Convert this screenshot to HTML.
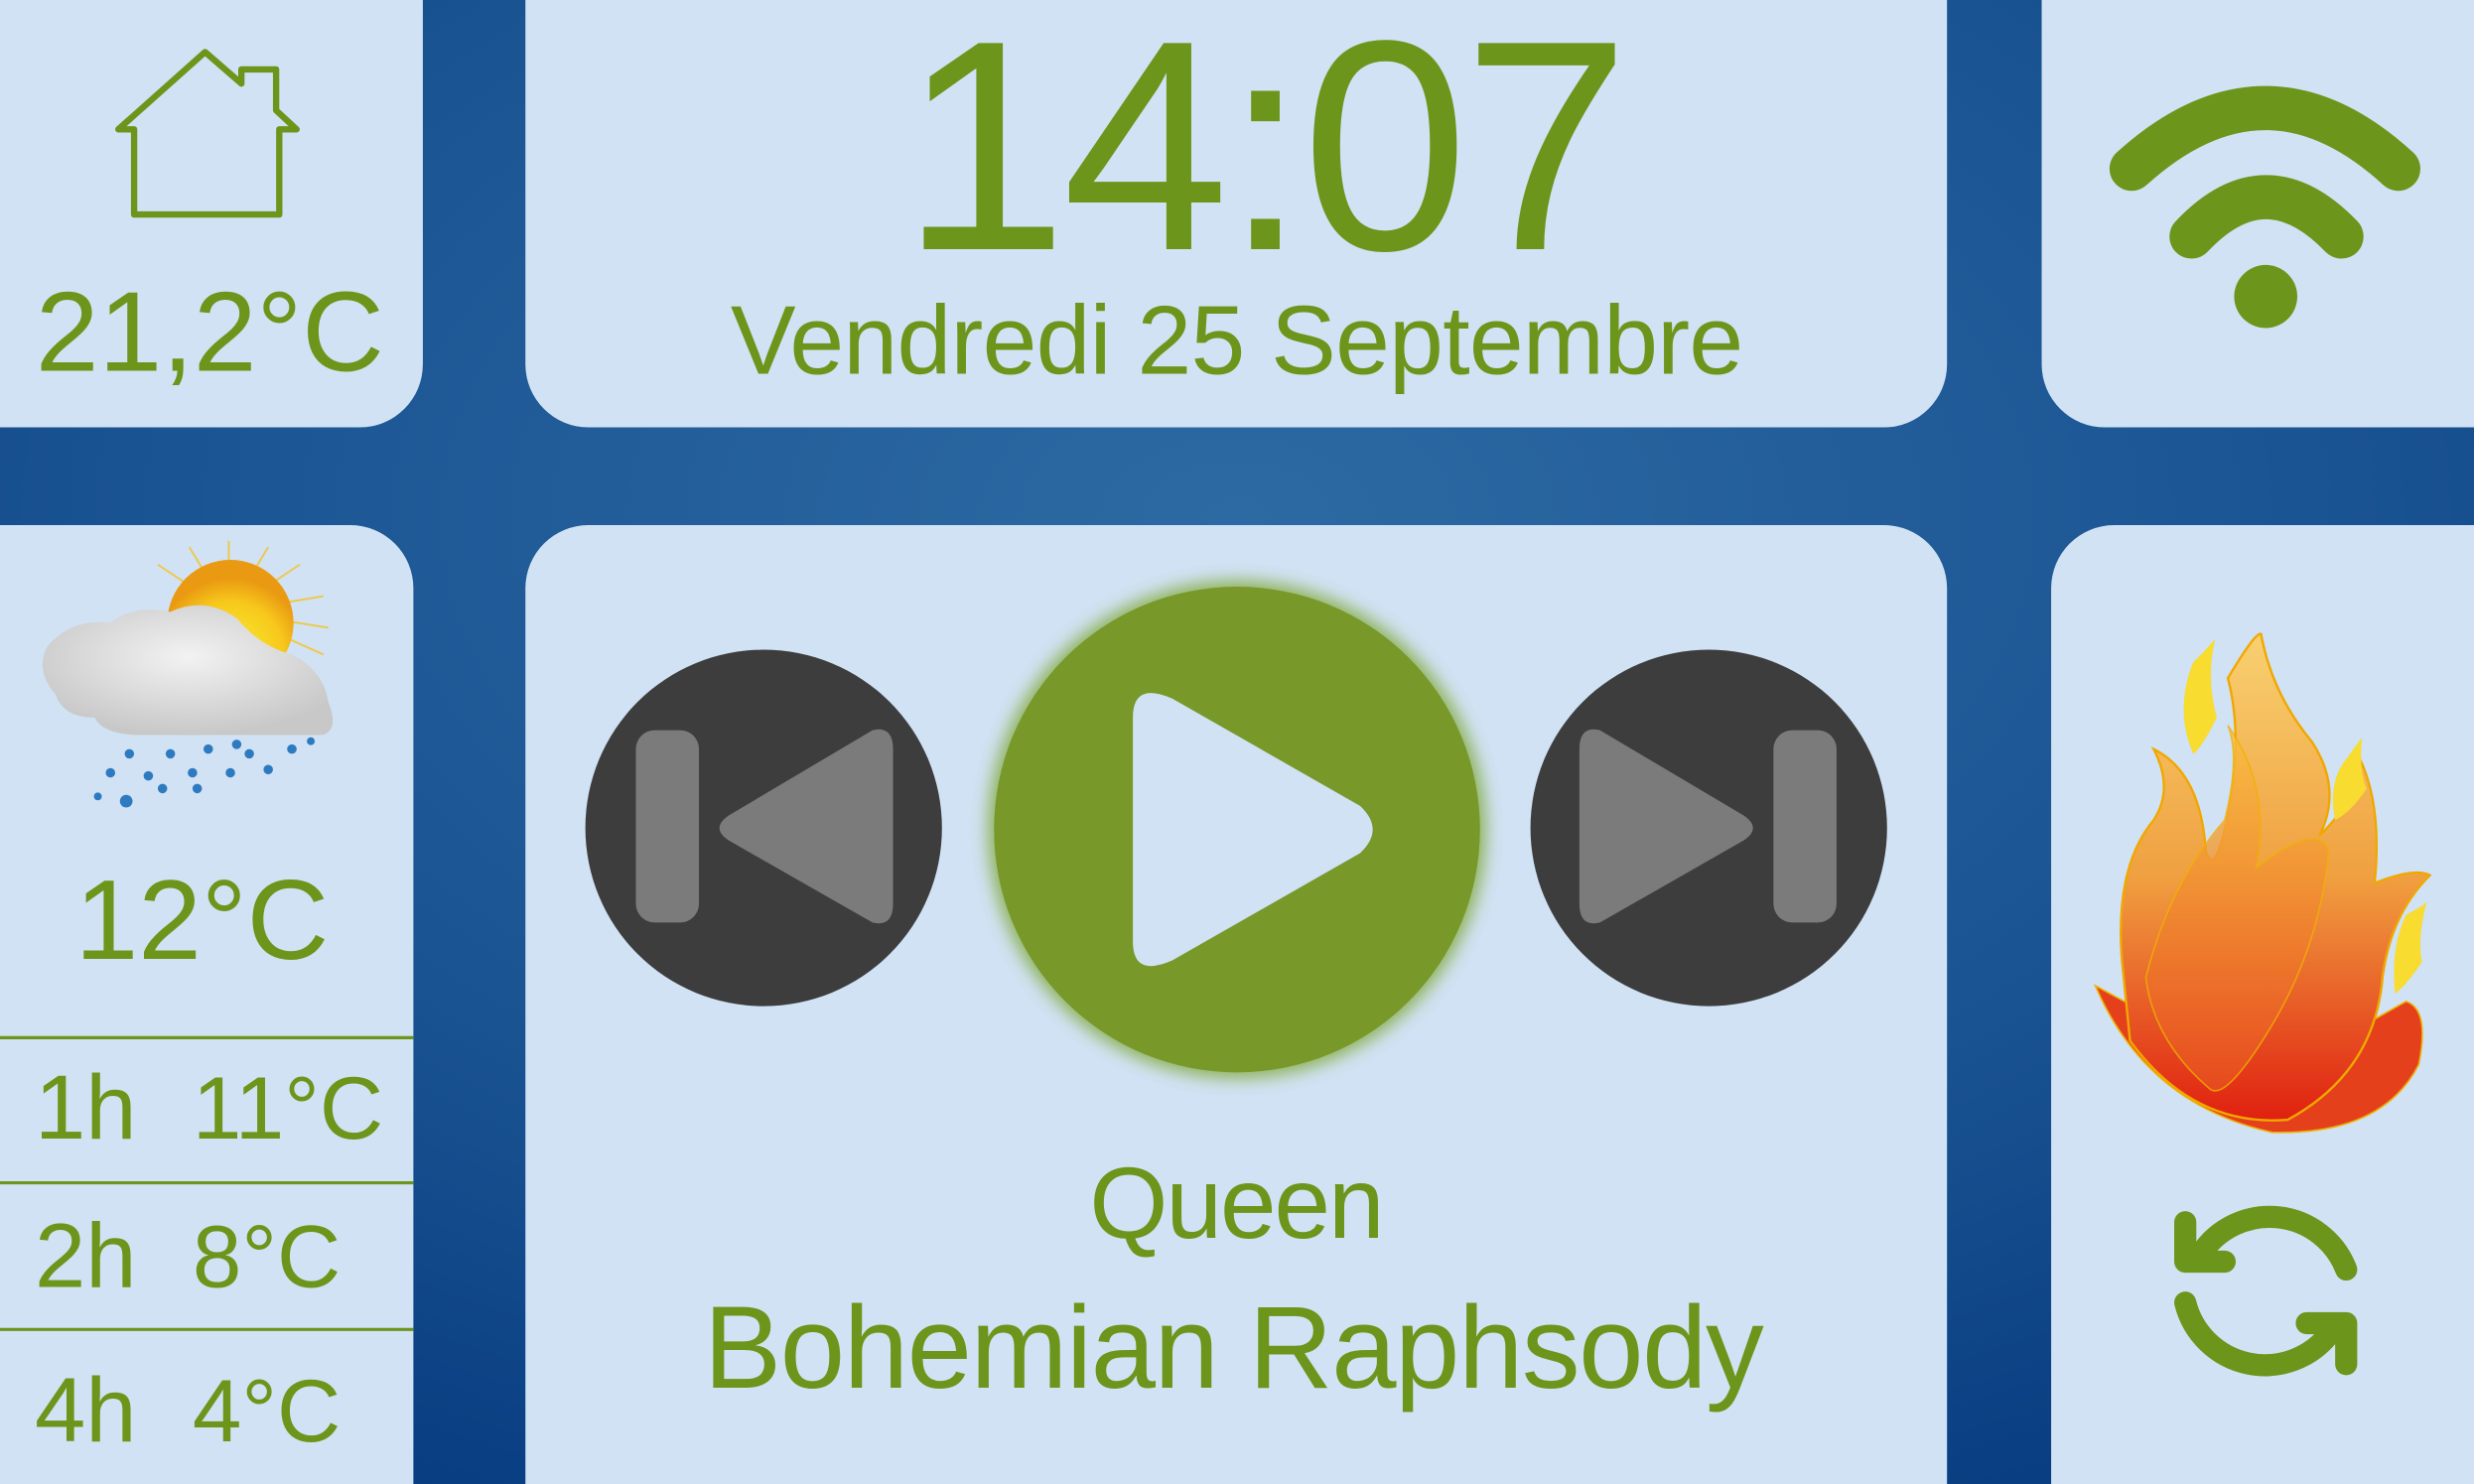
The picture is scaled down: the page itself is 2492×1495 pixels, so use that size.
<!DOCTYPE html>
<html><head><meta charset="utf-8"><style>
html,body{margin:0;padding:0;width:2492px;height:1495px;overflow:hidden;background:#0b4283}
svg{display:block}
text{font-family:"Liberation Sans",sans-serif;fill:#6b961b}
</style></head><body>
<svg width="2492" height="1495" viewBox="0 0 1568 941" preserveAspectRatio="none">
<defs>
<radialGradient id="bg" cx="0.5" cy="0.35" r="0.75">
<stop offset="0" stop-color="#2d6aa3"/><stop offset="0.6" stop-color="#1a5392"/><stop offset="1" stop-color="#073c80"/>
</radialGradient>
<radialGradient id="sun" cx="0.5" cy="0.75" r="0.6"><stop offset="0" stop-color="#f8f030"/><stop offset="0.7" stop-color="#f7c81c"/><stop offset="1" stop-color="#ea9a12"/></radialGradient>
<radialGradient id="cloud" cx="0.5" cy="0.4" r="0.6"><stop offset="0" stop-color="#f2f2f2"/><stop offset="1" stop-color="#c8c8c8"/></radialGradient>
<linearGradient id="fl" x1="0" y1="0" x2="0" y2="1"><stop offset="0" stop-color="#f8d070"/><stop offset="0.5" stop-color="#f0a040"/><stop offset="1" stop-color="#e02010"/></linearGradient>
<linearGradient id="fl2" x1="0" y1="0" x2="0" y2="1"><stop offset="0" stop-color="#f9c040"/><stop offset="1" stop-color="#e85020"/></linearGradient>
<filter id="glow" x="-20%" y="-20%" width="140%" height="140%"><feGaussianBlur stdDeviation="5"/></filter>
</defs>
<rect width="1568" height="941" fill="url(#bg)"/>
<g fill="#d0e2f3">
<path d="M0 0H268V231a40 40 0 0 1-40 40H0Z"/>
<path d="M333 0H1234V231a40 40 0 0 1-40 40H373a40 40 0 0 1-40-40Z"/>
<path d="M1294 0H1568V271H1334a40 40 0 0 1-40-40Z"/>
<path d="M0 333H222a40 40 0 0 1 40 40V941H0Z"/>
<path d="M373 333H1194a40 40 0 0 1 40 40V941H333V373a40 40 0 0 1 40-40Z"/>
<path d="M1340 333H1568V941H1300V373a40 40 0 0 1 40-40Z"/>
</g>
<!-- house -->
<path d="M75 82L130 33L153 53V44H175V70L188 82H177V136H85V82Z" fill="none" stroke="#6b961b" stroke-width="4" stroke-linejoin="round"/>
<text x="133" y="235" font-size="72" text-anchor="middle">21,2°C</text>
<text x="802" y="158" font-size="190" text-anchor="middle" textLength="462">14:07</text>
<text x="784" y="237" font-size="62" text-anchor="middle" textLength="642">Vendredi 25 Septembre</text>
<!-- wifi -->
<g fill="none" stroke="#6b961b" stroke-width="28" stroke-linecap="round">
<path d="M1351 107Q1436 30 1520 107"/>
<path d="M1389 150Q1436 100 1484 150"/>
</g>
<circle cx="1436" cy="188" r="20" fill="#6b961b"/>
<!-- weather -->
<g stroke="#f7c21c" stroke-width="1.2" opacity="0.8">
<path d="M145 388L145 343M145 388L170 347M145 388L190 358M145 388L205 378M145 388L208 398M145 388L120 347M145 388L100 358M145 388L205 415"/>
</g>
<circle cx="146" cy="395" r="40" fill="url(#sun)"/>
<path d="M30 410Q45 392 70 395Q85 383 108 388Q130 378 150 392Q165 410 185 415Q205 425 208 445Q215 462 205 466H85Q65 465 60 455Q40 455 35 440Q22 425 30 410Z" fill="url(#cloud)"/>
<g fill="#2e7ac0">
<circle cx="70" cy="490" r="3"/><circle cx="82" cy="478" r="3"/><circle cx="94" cy="492" r="3"/><circle cx="108" cy="478" r="3"/><circle cx="122" cy="490" r="3"/><circle cx="132" cy="475" r="3"/><circle cx="146" cy="490" r="3"/><circle cx="158" cy="478" r="3"/><circle cx="170" cy="488" r="3"/><circle cx="185" cy="475" r="3"/><circle cx="80" cy="508" r="4"/><circle cx="62" cy="505" r="2.5"/><circle cx="103" cy="500" r="3"/><circle cx="125" cy="500" r="3"/><circle cx="150" cy="472" r="3"/><circle cx="197" cy="470" r="2.5"/>
</g>
<text x="128" y="608" font-size="72" text-anchor="middle">12°C</text>
<g stroke="#6b961b" stroke-width="2"><path d="M0 658H262M0 750H262M0 843H262"/></g>
<text x="22" y="722" font-size="58">1h</text><text x="122" y="722" font-size="56">11°C</text>
<text x="22" y="816" font-size="58">2h</text><text x="122" y="816" font-size="56">8°C</text>
<text x="22" y="914" font-size="58">4h</text><text x="122" y="914" font-size="56">4°C</text>
<!-- buttons -->
<circle cx="484" cy="525" r="113" fill="#3d3d3d"/>
<rect x="403" y="463" width="40" height="122" rx="12" fill="#7b7b7c"/>
<path d="M553 463Q566 460 566 475V573Q566 588 553 585L462 533Q450 525 462 517Z" fill="#7b7b7c"/>
<circle cx="784" cy="526" r="158" fill="#80a838" filter="url(#glow)" opacity="0.8"/>
<circle cx="784" cy="526" r="154" fill="#78982a"/>
<path d="M718 455Q718 432 743 443L862 511Q878 526 862 541L743 609Q718 620 718 597Z" fill="#d0e2f3"/>
<circle cx="1083" cy="525" r="113" fill="#3d3d3d"/>
<rect x="1124" y="463" width="40" height="122" rx="12" fill="#7b7b7c"/>
<path d="M1014 463Q1001 460 1001 475V573Q1001 588 1014 585L1105 533Q1117 525 1105 517Z" fill="#7b7b7c"/>
<text x="784" y="785" font-size="64" text-anchor="middle" textLength="187">Queen</text>
<text x="782" y="880" font-size="74" text-anchor="middle" textLength="672">Bohemian Raphsody</text>
<!-- flame -->
<path d="M1328 625Q1360 700 1440 718Q1510 720 1533 675Q1540 640 1525 635Q1480 660 1450 680Q1400 665 1328 625Z" fill="#e5401c" stroke="#f0b000" stroke-width="1"/>
<path d="M1345 610Q1340 550 1365 520Q1378 500 1365 475Q1395 490 1398 540Q1405 560 1415 500Q1420 460 1412 430Q1430 400 1433 402Q1440 440 1465 470Q1485 500 1470 530Q1500 500 1495 480Q1510 510 1505 560Q1530 550 1540 555Q1515 580 1510 620Q1505 680 1450 710Q1390 715 1350 660Z" fill="url(#fl)" stroke="#f0a800" stroke-width="1.5"/>
<path d="M1360 620Q1375 560 1410 520Q1420 480 1412 460Q1440 500 1430 550Q1470 520 1476 540Q1470 600 1440 650Q1410 700 1400 690Q1365 660 1360 620Z" fill="url(#fl2)" opacity="0.8" stroke="#f0b000" stroke-width="1"/>
<path d="M1390 420Q1400 410 1404 405Q1398 430 1405 455Q1395 475 1390 478Q1378 450 1390 420Z" fill="#f8dc30"/>
<path d="M1488 480Q1495 470 1497 468Q1495 490 1500 500Q1490 515 1480 520Q1475 495 1488 480Z" fill="#f8dc30"/>
<path d="M1525 580Q1535 575 1538 572Q1532 595 1535 610Q1525 625 1518 630Q1515 600 1525 580Z" fill="#f8dc30"/>
<!-- refresh -->
<g fill="none" stroke="#6b961b" stroke-width="14" stroke-linecap="round" stroke-linejoin="round">
<path d="M1395 795A52 52 0 0 1 1487 805"/>
<path d="M1385 775V800H1410"/>
<path d="M1385 826A52 52 0 0 0 1477 845"/>
<path d="M1487 865V839H1462"/>
</g>
</svg>
</body></html>
